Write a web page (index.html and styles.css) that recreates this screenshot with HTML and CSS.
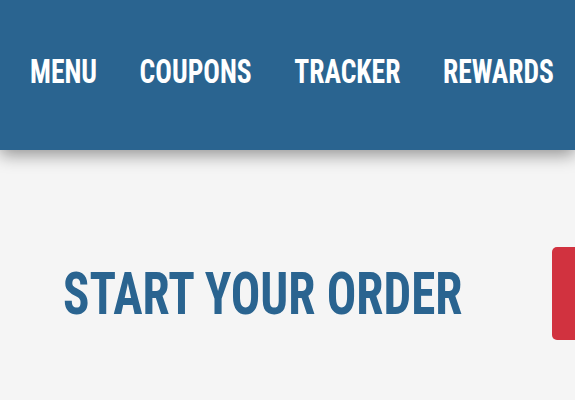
FILE: index.html
```html
<!DOCTYPE html>
<html>
<head>
<meta charset="utf-8">
<link rel="stylesheet" href="styles.css">
</head>
<body>
<header class="topbar">
  <nav class="nav">
    <a class="nav-link" href="#">MENU</a>
    <a class="nav-link" href="#">COUPONS</a>
    <a class="nav-link" href="#">TRACKER</a>
    <a class="nav-link" href="#">REWARDS</a>
  </nav>
</header>
<main class="order">
  <h1 class="order-title">START YOUR ORDER</h1>
  <button class="order-btn" type="button"></button>
</main>
</body>
</html>
```
FILE: styles.css
```css
html, body {
  margin: 0;
  padding: 0;
}
body {
  width: 575px;
  height: 400px;
  overflow: hidden;
  background: #f5f5f5;
  font-family: "Roboto Condensed", "Open Sans", sans-serif;
}
.topbar {
  position: relative;
  z-index: 1;
  height: 150px;
  padding-left: 30px;
  background: #2a6490;
  box-shadow: 0 5px 16px rgba(0, 0, 0, 0.4);
  display: flex;
  align-items: center;
}
.nav {
  display: flex;
  gap: 51px;
  margin-top: -8px;
  transform: scaleX(0.835);
  transform-origin: left center;
}
.nav-link {
  color: #ffffff;
  text-decoration: none;
  font-weight: bold;
  font-size: 33px;
  white-space: nowrap;
}
.order {
  display: grid;
  grid-template-columns: 489px 200px;
  align-items: center;
  padding: 97px 0 0 63px;
}
.order-title {
  margin: 0;
  color: #2a6490;
  font-size: 59px;
  font-weight: bold;
  white-space: nowrap;
  transform: scaleX(0.831);
  transform-origin: left center;
}
.order-btn {
  width: 200px;
  height: 93px;
  border: none;
  border-radius: 5px;
  background: #d1323f;
}
```
